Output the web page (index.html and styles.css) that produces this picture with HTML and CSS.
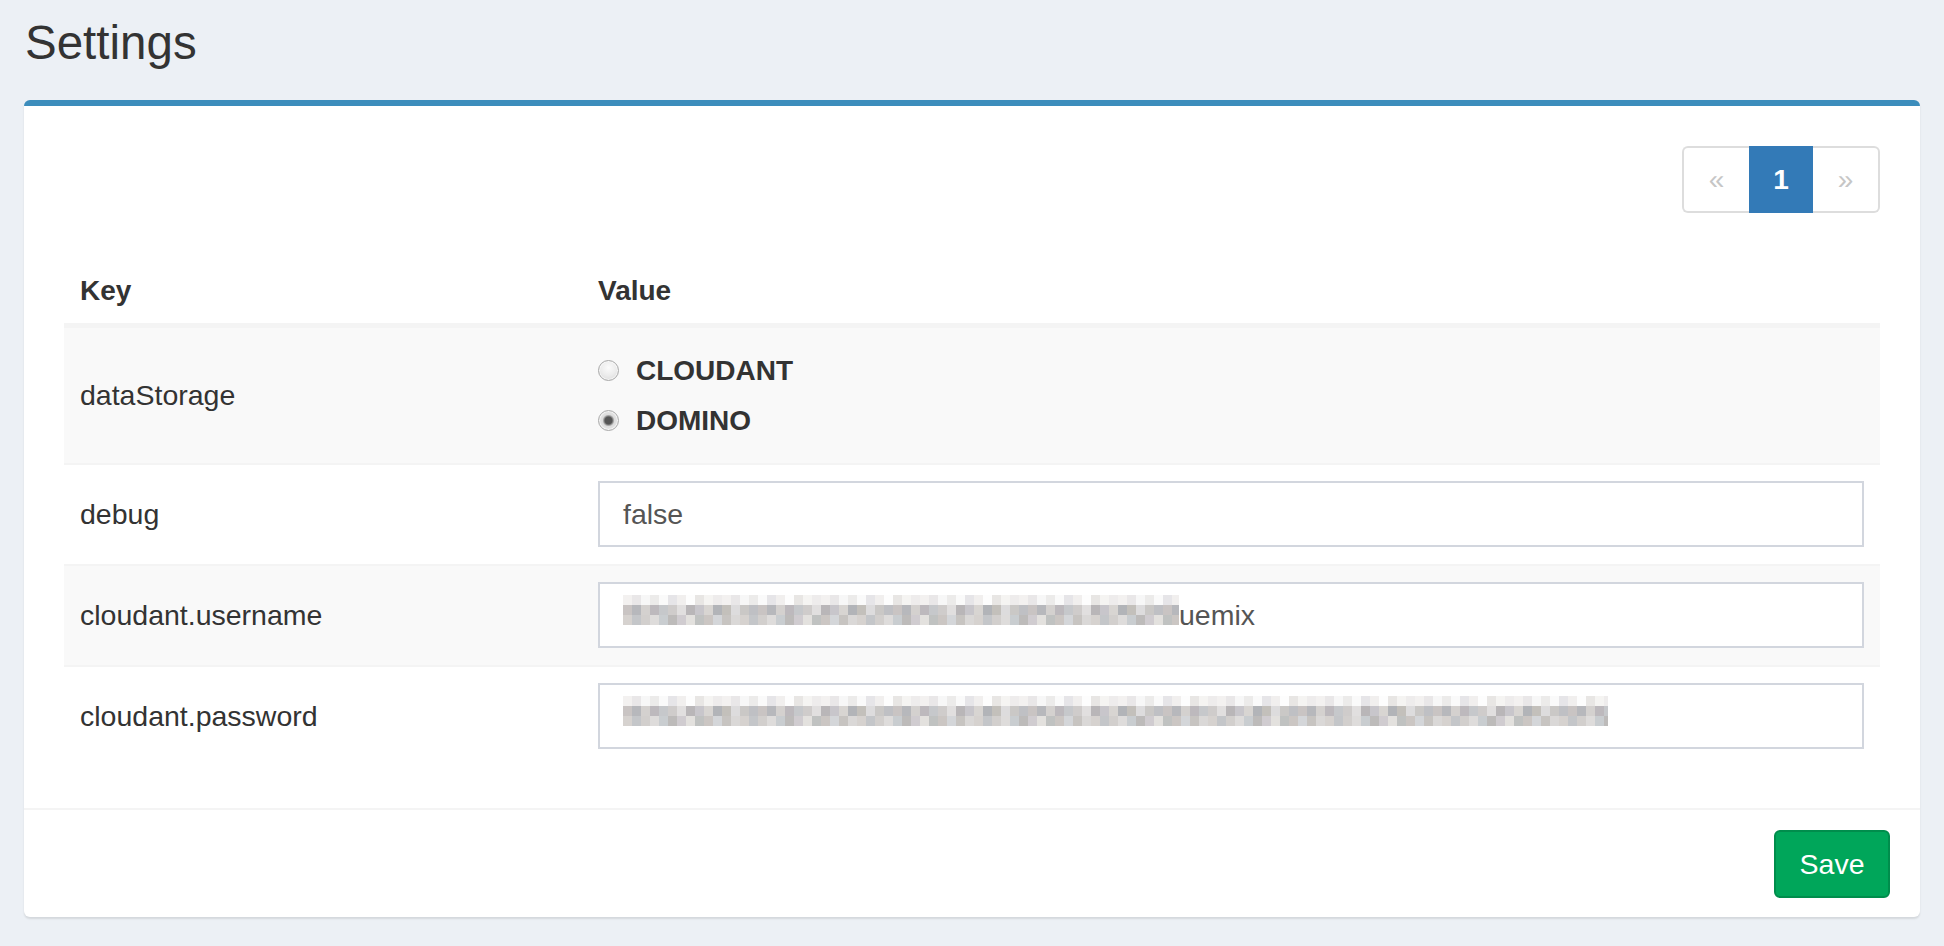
FILE: index.html
```html
<!DOCTYPE html>
<html lang="en">
<head>
<meta charset="utf-8">
<title>Settings</title>
<link rel="stylesheet" href="styles.css">
</head>
<body>
<div class="wrapper">
  <section class="content-header">
    <h1>Settings</h1>
  </section>
  <section class="content">
    <div class="box">
      <div class="box-body">
        <div class="pager-row">
          <ul class="pagination">
            <li class="page first">«</li>
            <li class="page active">1</li>
            <li class="page last">»</li>
          </ul>
        </div>
        <table class="table">
          <colgroup><col class="col-key"><col></colgroup>
          <thead>
            <tr><th>Key</th><th>Value</th></tr>
          </thead>
          <tbody>
            <tr class="striped">
              <td>dataStorage</td>
              <td>
                <div class="radio-group">
                  <label class="radio"><input type="radio" name="ds" class="radio-input">CLOUDANT</label>
                  <label class="radio"><input type="radio" name="ds" class="radio-input" checked>DOMINO</label>
                </div>
              </td>
            </tr>
            <tr>
              <td>debug</td>
              <td><div class="form-control">false</div></td>
            </tr>
            <tr class="striped">
              <td>cloudant.username</td>
              <td><div class="form-control"><span class="blur blur-user"></span>uemix</div></td>
            </tr>
            <tr>
              <td>cloudant.password</td>
              <td><div class="form-control"><span class="blur blur-pass"></span></div></td>
            </tr>
          </tbody>
        </table>
      </div>
      <div class="box-footer">
        <button class="btn-save" type="button">Save</button>
      </div>
    </div>
  </section>
</div>
</body>
</html>
```

FILE: styles.css
```css
* {
  box-sizing: border-box;
}

html,
body {
  margin: 0;
  background: #ecf0f5;
  font-family: "Liberation Sans", Arial, sans-serif;
  font-size: 28.5px;
  color: #333;
}

.content-header {
  padding: 17px 25px 0;
}

.content-header h1 {
  margin: 0;
  font-size: 47.5px;
  line-height: 51px;
  font-weight: 400;
  color: #333;
}

.content {
  padding: 32px 24px 24px;
}

.box {
  background: #fff;
  border-top: 6px solid #3c8dbc;
  border-radius: 6px;
  box-shadow: 0 2px 2px rgba(0, 0, 0, 0.1);
}

.box-body {
  padding: 40px 40px 42px;
}

.pager-row {
  display: flex;
  justify-content: flex-end;
}

.pagination {
  display: flex;
  margin: 0;
  padding: 0;
  list-style: none;
}

.page {
  height: 67px;
  display: flex;
  align-items: center;
  justify-content: center;
  font-size: 28px;
  color: #c6c6c6;
  background: #fff;
  border: 2px solid #ddd;
}

.page.first {
  width: 67px;
  border-right: none;
  border-radius: 6px 0 0 6px;
}

.page.last {
  width: 67px;
  border-left: none;
  border-radius: 0 6px 6px 0;
}

.page.active {
  width: 64px;
  background: #337ab7;
  border-color: #337ab7;
  color: #fff;
  font-weight: 700;
}

.table {
  width: 100%;
  margin-top: 39px;
  border-collapse: separate;
  border-spacing: 0;
  table-layout: fixed;
}

.col-key {
  width: 518px;
}

.table th {
  text-align: left;
  font-size: 28px;
  font-weight: 700;
  line-height: 39px;
  padding: 19px 16px 13px;
  border-bottom: 3px solid #f4f4f4;
}

.table td {
  line-height: 39px;
  padding: 16px 16px 17px;
  border-top: 2px solid #f4f4f4;
  vertical-align: middle;
}

.table tr.striped td {
  background: #f9f9f9;
}

.radio-group {
  display: flex;
  flex-direction: column;
  gap: 11px;
  padding: 7px 0 6px;
}

.radio {
  display: flex;
  align-items: center;
  height: 39px;
  font-size: 28px;
  font-weight: 700;
  color: #333;
}

.radio-input {
  appearance: none;
  -webkit-appearance: none;
  width: 21px;
  height: 21px;
  margin: 0 17px 0 0;
  border: 1px solid #a9a9a9;
  border-radius: 50%;
  background: radial-gradient(circle at 50% 35%, #fbfbfb 0, #ececec 50%, #d6d6d6 100%);
  box-shadow: inset 0 0 0 1px rgba(255, 255, 255, 0.6);
}

.radio-input:checked {
  background: radial-gradient(circle, #555 0, #555 3.5px, #8a8a8a 4.5px, #dcdcdc 6px, #f2f2f2 100%);
}

.form-control {
  height: 66px;
  border: 2px solid #d2d6de;
  background: #fff;
  padding: 0 23px;
  line-height: 62px;
  color: #555;
  white-space: nowrap;
  overflow: hidden;
}

.blur {
  display: inline-block;
  height: 30px;
  vertical-align: baseline;
  background-image:
    repeating-linear-gradient(90deg, #f3f1f0 0 9px, #e9e7e8 9px 18px, #f7f7f7 18px 27px, #ecebea 27px 36px, #fafafa 36px 45px, #e6e5e8 45px 54px, #f1efee 54px 63px, #fdfdfd 63px 72px, #e8e6e4 72px 81px, #f5f4f2 81px 90px, #eeecec 90px 99px),
    repeating-linear-gradient(90deg, #c9c4c3 0 9px, #b7b8bc 9px 18px, #d4d1cf 18px 27px, #bdb9bd 27px 36px, #c6c8cb 36px 45px, #cfcccb 45px 54px, #e1dfdf 54px 63px, #b9b6b8 63px 72px, #c8c6cb 72px 81px, #d8d5d2 81px 90px, #b2b4b8 90px 99px, #c3c0bb 99px 108px, #dddcdd 108px 117px, #cac8c6 117px 126px, #bfc0c4 126px 135px),
    repeating-linear-gradient(90deg, #d6d2cf 0 9px, #c4c6c9 9px 18px, #d2cfcd 18px 27px, #dedcdb 27px 36px, #c9cdd0 36px 45px, #bdbbba 45px 54px, #d0ccd0 54px 63px, #e3e1de 63px 72px, #c0c2c1 72px 81px, #cbc6c3 81px 90px, #d4d6d9 90px 99px, #c7c4c1 99px 108px, #dad8d7 108px 117px);
  background-size: 100% 10px;
  background-repeat: no-repeat;
  background-position: 0 0, 0 10px, 0 20px;
}

.blur-user {
  width: 556px;
}

.blur-pass {
  width: 985px;
}

.box-footer {
  display: flex;
  justify-content: flex-end;
  border-top: 2px solid #f4f4f4;
  padding: 20px 30px 19px;
}

.btn-save {
  width: 116px;
  height: 68px;
  background: #00a65a;
  border: 2px solid #008d4c;
  border-radius: 6px;
  color: #fff;
  font-family: "Liberation Sans", Arial, sans-serif;
  font-size: 28.5px;
  padding: 0;
}
```
